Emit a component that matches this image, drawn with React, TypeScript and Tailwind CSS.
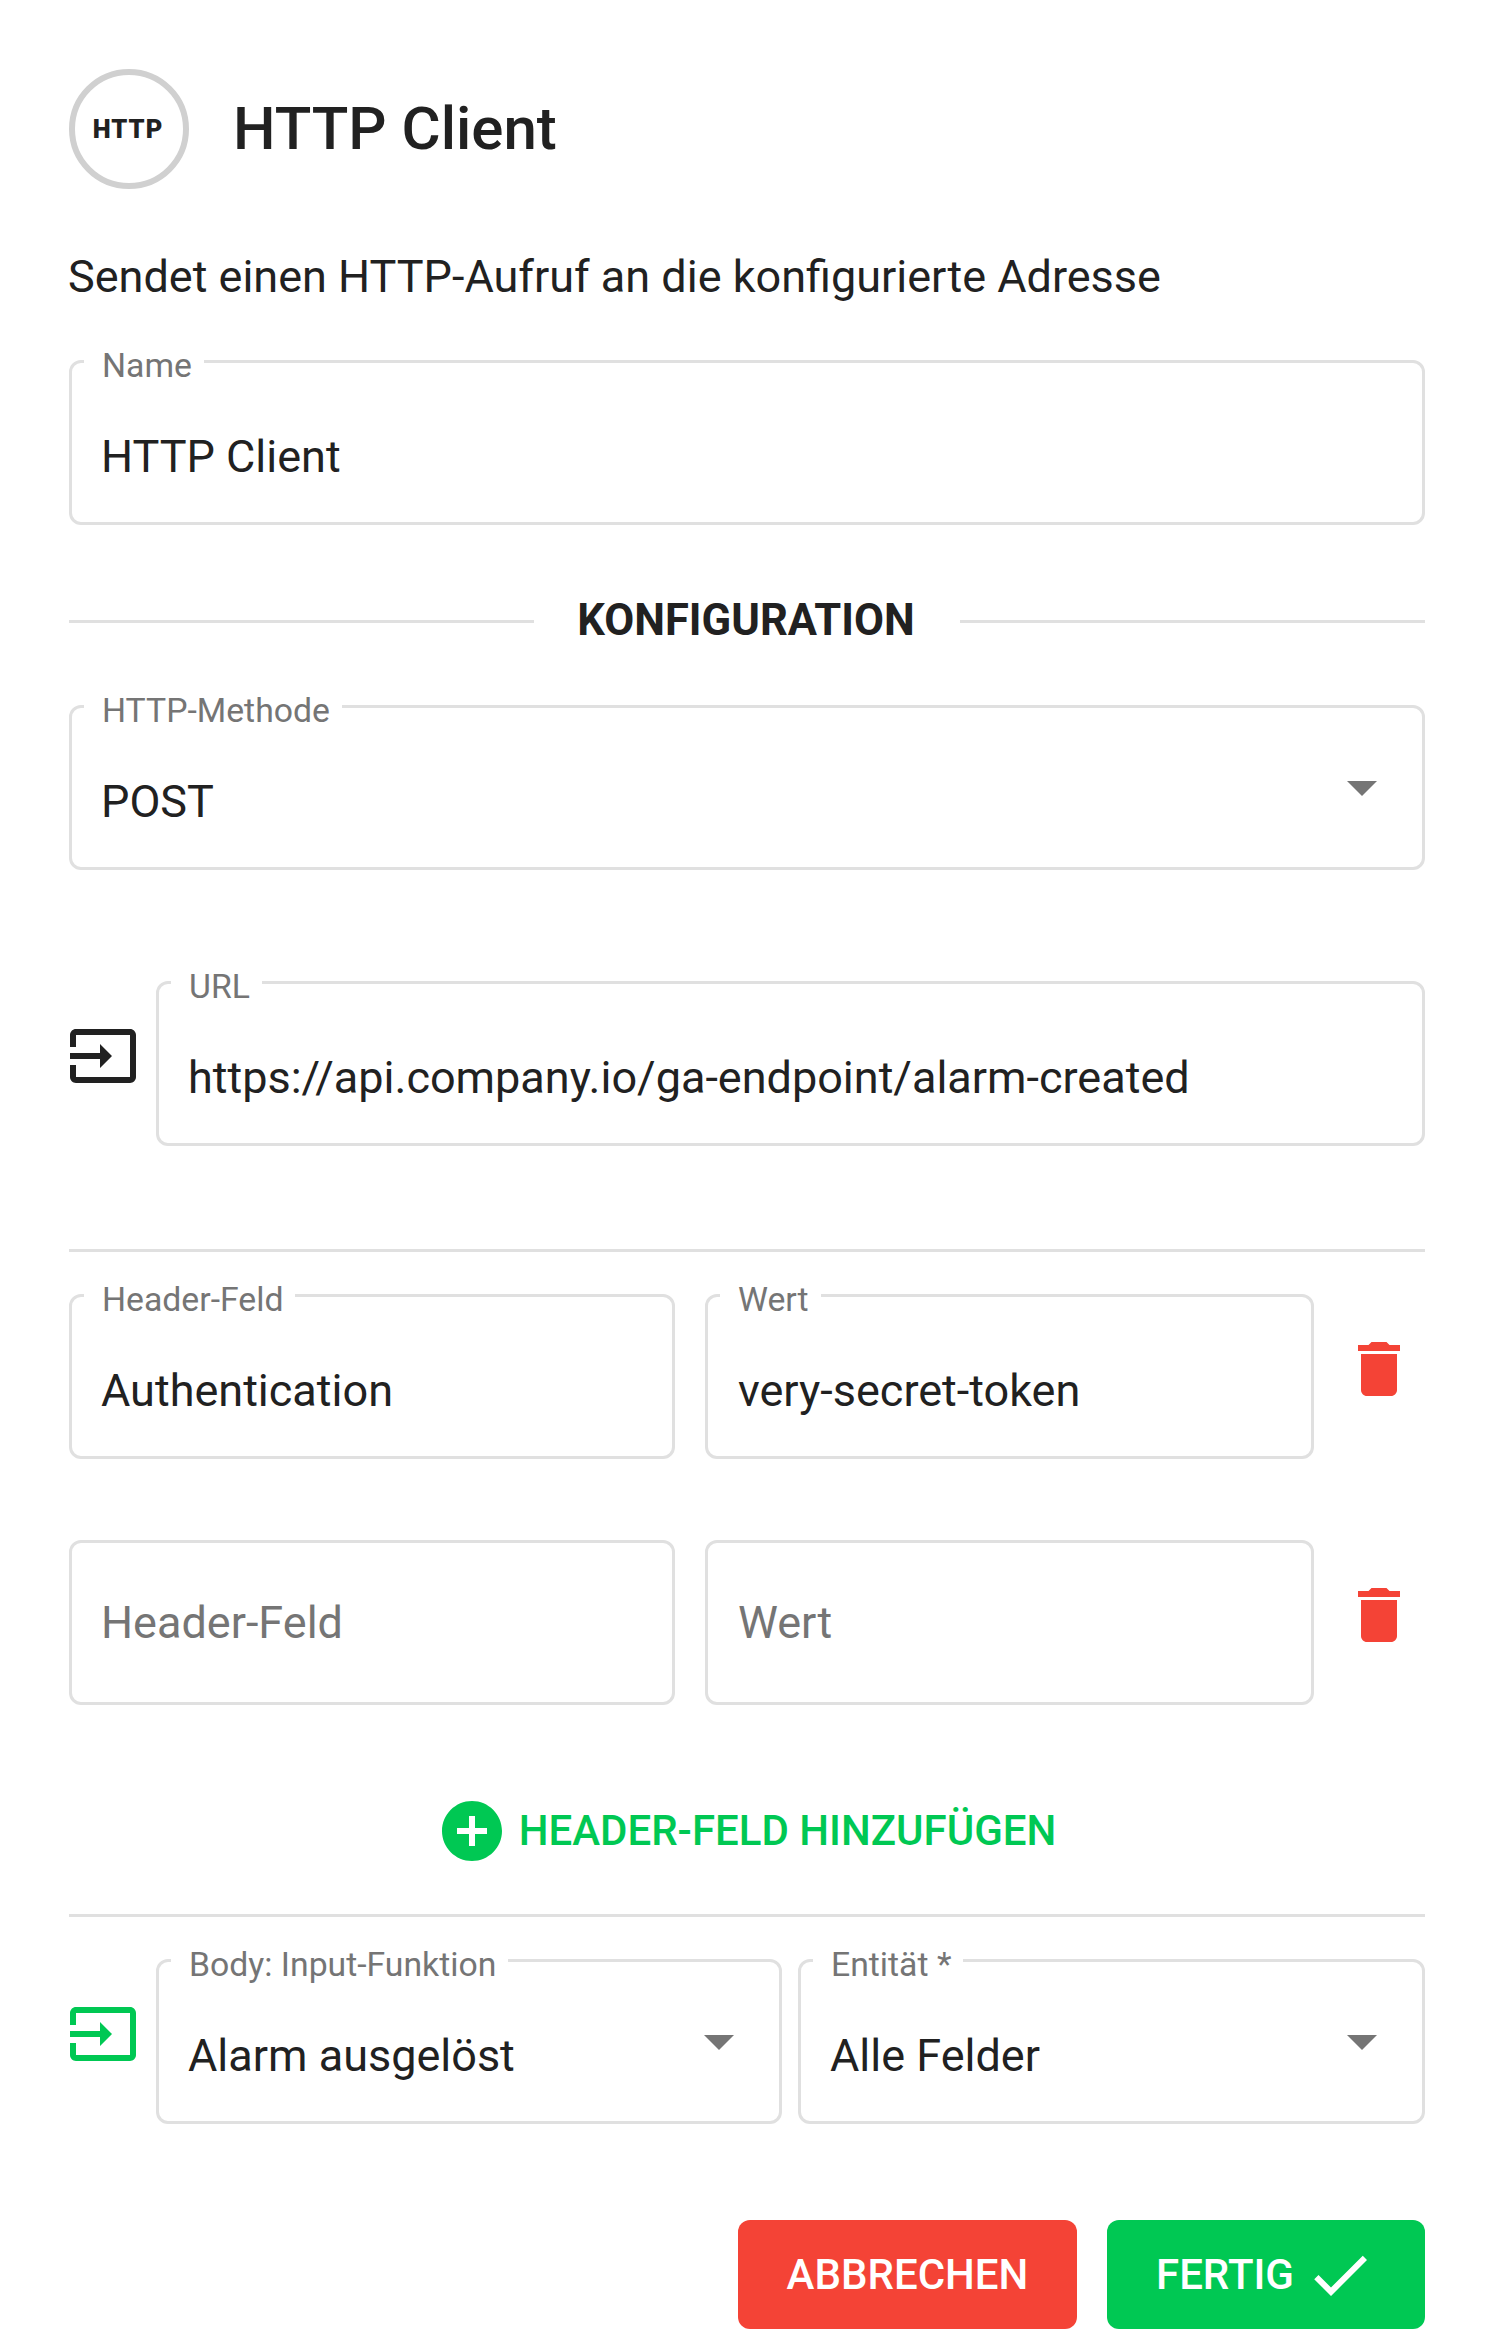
import React from "react";

const INPUT_ICON =
  "M21 3.01H3c-1.1 0-2 .9-2 2V9h2V4.99h18v14.03H3V15H1v4.01c0 1.1.9 1.98 2 1.98h18c1.1 0 2-.88 2-1.98v-14c0-1.11-.9-2-2-2zM11 16l4-4-4-4v3H1v2h10v3z";
const TRASH_ICON =
  "M6 19c0 1.1.9 2 2 2h8c1.1 0 2-.9 2-2V7H6v12zM19 4h-3.5l-1-1h-5l-1 1H5v2h14V4z";
const ADD_ICON =
  "M12 2C6.48 2 2 6.48 2 12s4.48 10 10 10 10-4.48 10-10S17.52 2 12 2zm5 11h-4v4h-2v-4H7v-2h4V7h2v4h4v2z";
const CHECK_ICON = "M9 16.17L4.83 12l-1.42 1.41L9 19 21 7l-1.41-1.41z";

const Icon = ({ d, className }: { d: string; className?: string }) => (
  <svg viewBox="0 0 24 24" fill="currentColor" className={className}>
    <path d={d} />
  </svg>
);

interface FieldProps {
  label?: string;
  value?: string;
  placeholder?: string;
  select?: boolean;
  className?: string;
}

const Field: React.FC<FieldProps> = ({ label, value, placeholder, select, className }) => (
  <div
    className={`relative flex h-[165px] items-center rounded-[12px] border-[3px] border-[#e0e0e0] pl-[29px] pr-[30px] ${
      value ? "pt-[29px]" : "pt-[1px]"
    } ${className ?? ""}`}
  >
    {label && (
      <span className="absolute -top-[11px] left-[12px] h-[28px] bg-white pl-[18px] pr-[12px] text-[33.75px] leading-[28px] text-[#757575]">
        {label}
      </span>
    )}
    <input
      readOnly
      value={value ?? ""}
      placeholder={placeholder}
      className="w-full min-w-0 bg-transparent text-[45px] leading-[54px] text-[#212121] outline-none placeholder:text-[#757575]"
    />
    {select && (
      <svg viewBox="0 0 24 24" fill="#757575" className="absolute right-[24px] top-[43px] h-[72px] w-[72px]">
        <path d="M7 10l5 5 5-5z" />
      </svg>
    )}
  </div>
);

const HeaderRow = ({ name, value }: { name?: boolean; value?: boolean }) => (
  <div className="flex items-start">
    <Field
      className="w-[606px] shrink-0"
      label={name ? "Header-Feld" : undefined}
      value={name ? "Authentication" : undefined}
      placeholder="Header-Feld"
    />
    <Field
      className="ml-[30px] w-[609px] shrink-0 [&>input]:ml-[1px]"
      label={value ? "Wert" : undefined}
      value={value ? "very-secret-token" : undefined}
      placeholder="Wert"
    />
    <Icon d={TRASH_ICON} className="ml-[29px] mt-[39px] h-[72px] w-[72px] shrink-0 text-[#f44336]" />
  </div>
);

export default function App() {
  return (
    <div className="h-[2348px] overflow-hidden bg-white px-[69px] pt-[69px] font-['Roboto',sans-serif] text-[#212121]">
      {/* Title */}
      <div className="flex items-center">
        <div className="flex h-[120px] w-[120px] items-center justify-center rounded-full border-[6px] border-[#d0d0d0] pr-[2px] pt-[2px]">
          <span className="text-[25.5px] font-black leading-none tracking-[1px]">HTTP</span>
        </div>
        <h1 className="ml-[44px] text-[60px] font-medium leading-[72px]">HTTP Client</h1>
      </div>

      <p className="-ml-[1px] mt-[60px] text-[45px] leading-[56px]">
        Sendet einen HTTP-Aufruf an die konfigurierte Adresse
      </p>

      <Field className="mt-[55px]" label="Name" value="HTTP Client" />

      {/* Konfiguration */}
      <div className="mt-[71px] flex items-center gap-[43px]">
        <div className="h-[3px] flex-1 bg-[#e0e0e0]" />
        <span className="mr-[2px] text-[43.5px] font-bold leading-[50px]">KONFIGURATION</span>
        <div className="h-[3px] flex-1 bg-[#e0e0e0]" />
      </div>

      <Field className="mt-[59px]" label="HTTP-Methode" value="POST" select />

      {/* URL */}
      <div className="mt-[111px] flex items-start">
        <Icon d={INPUT_ICON} className="-ml-[2px] mt-[39px] h-[72px] w-[72px] shrink-0 text-[#212121]" />
        <Field
          className="ml-[17px] flex-1"
          label="URL"
          value="https://api.company.io/ga-endpoint/alarm-created"
        />
      </div>

      <div className="mt-[103px] h-[3px] bg-[#e0e0e0]" />

      <div className="mt-[42px]">
        <HeaderRow name value />
      </div>
      <div className="mt-[81px]">
        <HeaderRow />
      </div>

      {/* Add header */}
      <button className="mx-auto mt-[90px] flex items-center pr-[2px] text-[#00c853]">
        <Icon d={ADD_ICON} className="h-[72px] w-[72px] shrink-0" />
        <span className="ml-[11px] text-[42px] font-medium leading-[50px]">HEADER-FELD HINZUFÜGEN</span>
      </button>

      <div className="mt-[47px] h-[3px] bg-[#e0e0e0]" />

      {/* Body */}
      <div className="mt-[42px] flex items-start">
        <Icon d={INPUT_ICON} className="-ml-[2px] mt-[39px] h-[72px] w-[72px] shrink-0 text-[#00c853]" />
        <div className="ml-[17px] grid flex-1 grid-cols-[626px_1fr] gap-[16px]">
          <Field label="Body: Input-Funktion" value="Alarm ausgelöst" select />
          <Field label="Entität *" value="Alle Felder" select />
        </div>
      </div>

      {/* Actions */}
      <div className="mt-[96px] flex justify-end gap-[30px]">
        <button className="flex h-[109px] w-[339px] items-center justify-center rounded-[12px] bg-[#f44336] text-[42px] font-medium text-white">
          ABBRECHEN
        </button>
        <button className="flex h-[109px] w-[318px] items-center justify-center rounded-[12px] bg-[#00c853] text-[42px] font-medium text-white">
          FERTIG
          <Icon d={CHECK_ICON} className="ml-[10px] h-[72px] w-[72px] shrink-0" />
        </button>
      </div>
    </div>
  );
}
